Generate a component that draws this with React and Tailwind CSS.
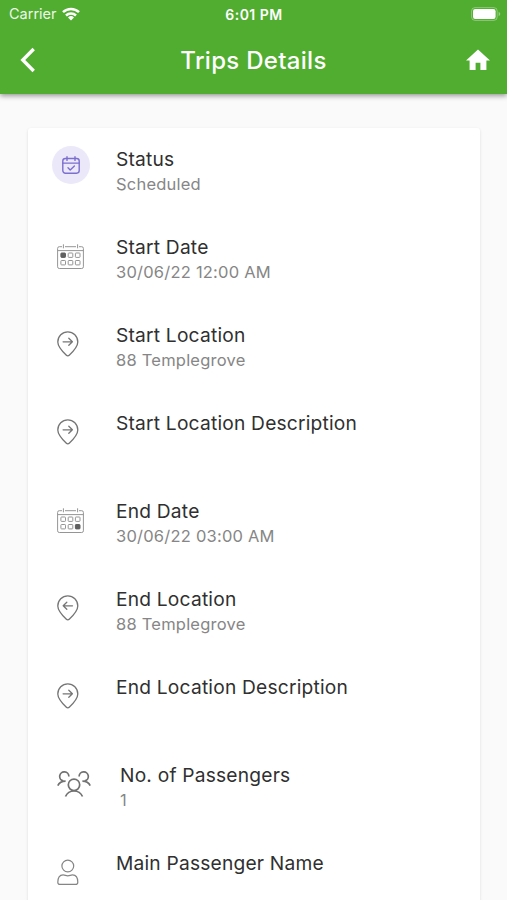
import React from 'react';

function WifiIcon() {
  return (
    <svg width="18" height="14" viewBox="0 0 18 14" fill="none" stroke="white" strokeWidth="2.5">
      <path d="M1 5.2a11.5 11.5 0 0 1 16 0" />
      <path d="M4 8.5a7.2 7.2 0 0 1 10 0" />
      <path d="M9 13.4 6 10.5a4.3 4.3 0 0 1 6 0Z" fill="white" stroke="none" />
    </svg>
  );
}

function BatteryIcon() {
  return (
    <svg width="30" height="14" viewBox="0 0 30 14" fill="none">
      <rect x="0.6" y="0.6" width="25.6" height="12.8" rx="3.4" stroke="white" strokeOpacity="0.35" />
      <rect x="2" y="2" width="22.6" height="10" rx="2.2" fill="white" />
      <path d="M27.6 4.8c2.2.8 2.2 3.6 0 4.4Z" fill="white" fillOpacity="0.4" />
    </svg>
  );
}

function StatusIcon() {
  return (
    <div className="-ml-[5px] -mt-[9px] flex h-[38px] w-[38px] items-center justify-center rounded-full bg-[#ebe8f9]">
      <svg width="18" height="18" viewBox="0 0 18 18" fill="none" stroke="#7b6fcf" strokeWidth="1.4" strokeLinecap="round" strokeLinejoin="round">
        <rect x="0.8" y="2.5" width="16.4" height="14.7" rx="2.6" />
        <path d="M0.8 7.1h16.4M5 0.8v3.6M13 0.8v3.6M6 11.800l2.200 2.200 4.200-4" />
      </svg>
    </div>
  );
}

const cells = [
  [3.9, 9],
  [11.2, 9],
  [18.4, 9],
  [3.9, 16.5],
  [11.2, 16.5],
  [18.4, 16.5],
];

function CalendarIcon({ marked }) {
  return (
    <svg className="mt-px" width="27" height="26" viewBox="0 0 27 26" fill="none" stroke="#959595">
      <path d="M5 2.7H2.3A1.7 1.7 0 0 0 .6 4.4v18.4a1.7 1.7 0 0 0 1.7 1.7h22.4a1.7 1.7 0 0 0 1.7-1.7V4.4a1.7 1.7 0 0 0-1.7-1.7H22M8 2.7h11M.6 6.6h25.8M6.4.3v4M20.6.3v4" />
      {cells.map(([x, y], i) => (
        <rect key={i} x={x} y={y} width="4.6" height="4.4" rx="0.7" fill={i === marked ? '#606060' : 'none'} stroke={i === marked ? '#606060' : '#959595'} />
      ))}
    </svg>
  );
}

function PinIcon({ back }) {
  return (
    <svg width="22" height="26" viewBox="0 0 22 26" fill="none" stroke="#757575" strokeWidth="1.3" strokeLinecap="round" strokeLinejoin="round">
      <path d="M10.8 24.9c-.5 0-1-.2-1.400-.6C5.300 20.300.8 15.900.8 10.900a10 10 0 0 1 20 0c0 5-4.500 9.400-8.600 13.400-.4.4-.9.6-1.400.6Z" />
      <path d={back ? 'M15.500 10.800H6.200M9.800 7.300l-3.600 3.500 3.600 3.500' : 'M6.100 10.800h9.300M11.800 7.300l3.600 3.500-3.600 3.500'} />
    </svg>
  );
}

function GroupIcon() {
  return (
    <svg width="34" height="27" viewBox="0 0 34 27" fill="none" stroke="#717171" strokeWidth="1.700">
      <circle cx="17" cy="13.800" r="5.700" />
      <path d="M8.500 25.500c1.500-3.400 4.600-5.500 8.500-5.500s7 2.100 8.500 5.500" />
      <path d="M11.900 5.400A4.600 4.600 0 1 0 6.200 9.900M8.600 10.100C4.800 10.100 2.200 11.600.8 14.700" />
      <path d="M22.100 5.400A4.600 4.600 0 1 1 27.800 9.900M25.400 10.100c3.800 0 6.400 1.500 7.800 4.600" />
    </svg>
  );
}

function UserIcon() {
  return (
    <svg width="22" height="27" viewBox="0 0 22 27" fill="none" stroke="#858585" strokeWidth="1.200">
      <circle cx="10.800" cy="7" r="5.900" />
      <path d="M.8 23.200c0-4.600 1.700-7.300 5.300-7.300 1.900 0 2.700.9 4.700.9s2.800-.9 4.700-.9c3.600 0 5.300 2.700 5.300 7.300 0 1.400-.8 2.200-2.200 2.200H3C1.600 25.400.8 24.600.8 23.200Z" />
    </svg>
  );
}

const rows = [
  { icon: <StatusIcon />, label: 'Status', value: 'Scheduled' },
  { icon: <CalendarIcon marked={0} />, label: 'Start Date', value: '30/06/22 12:00 AM' },
  { icon: <PinIcon />, label: 'Start Location', value: '88 Templegrove' },
  { icon: <PinIcon />, label: 'Start Location Description' },
  { icon: <CalendarIcon marked={5} />, label: 'End Date', value: '30/06/22 03:00 AM' },
  { icon: <PinIcon back />, label: 'End Location', value: '88 Templegrove' },
  { icon: <PinIcon />, label: 'End Location Description' },
  { icon: <GroupIcon />, label: 'No. of Passengers', value: '1', wide: true },
  { icon: <UserIcon />, label: 'Main Passenger Name' },
];

function DetailRow({ icon, label, value, wide }) {
  return (
    <div className="flex h-[88px] shrink-0 pl-[29px]">
      <div className={wide ? 'w-[63px] shrink-0 pt-[18px]' : 'w-[59px] shrink-0 pt-[18px]'}>{icon}</div>
      <div className="pt-[10px]">
        <p className="text-[19.2px] leading-[25px] tracking-[0.2px] text-[#303030]">{label}</p>
        <p className="text-[16.5px] leading-[24px] tracking-[0.22px] text-[#868686]">{value}</p>
      </div>
    </div>
  );
}

export default function App() {
  return (
    <div className="flex h-[900px] w-full flex-col overflow-hidden bg-[#fafafa] font-['Inter',sans-serif]">
      <header className="h-[94px] shrink-0 bg-[#51ad30] text-white shadow-[0_2px_5px_rgba(0,0,0,0.4)]">
        <div className="grid h-[27px] grid-cols-3 items-center pl-[9px] pr-[6px]">
          <div className="flex items-center gap-[5px] text-[14.5px]">
            <span className="opacity-90">Carrier</span>
            <WifiIcon />
          </div>
          <span className="-ml-0.5 pt-px text-center text-[14px] font-semibold tracking-[0.5px]">6:01 PM</span>
          <div className="flex justify-end">
            <BatteryIcon />
          </div>
        </div>
        <div className="grid h-[66px] grid-cols-[60px_1fr_60px] items-center">
          <svg className="ml-5" width="16" height="26" viewBox="0 0 16 26" fill="none" stroke="white" strokeWidth="3.400">
            <path d="M13.700 2 2.800 13l10.900 11" />
          </svg>
          <h1 className="pt-px text-center text-[24px] font-medium tracking-[0.3px]">Trips Details</h1>
          <svg className="ml-[19px]" width="24" height="22" viewBox="0 0 24 22" fill="white">
            <path d="M9.600 21v-7.200h4.800V21h6V11.400H24L12 .6 0 11.400h3.600V21Z" />
          </svg>
        </div>
      </header>
      <main className="flex min-h-0 flex-1 flex-col overflow-hidden pl-7 pr-[27px] pt-[34px]">
        <div className="flex flex-col rounded-t-[3px] bg-white pt-[9px] shadow-[0_1px_3px_rgba(0,0,0,0.12)]">
          {rows.map((row, i) => (
            <DetailRow key={i} {...row} />
          ))}
        </div>
      </main>
    </div>
  );
}
